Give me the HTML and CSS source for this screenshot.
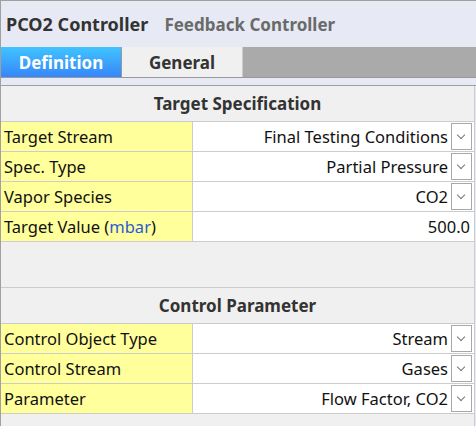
FILE: index.html
```html
<!DOCTYPE html>
<html>
<head>
	<title>PCO2 Controller</title>
	<link rel="stylesheet" href="styles.css">
</head>
<body>
	<div id="window">
		<div id="titlebar">
			<span class="title">PCO2 Controller</span>
			<span class="subtitle">Feedback Controller</span>
		</div>
		<div id="tabs">
			<div class="tab active">Definition</div>
			<div class="tab">General</div>
		</div>
		<div id="tab_gap"></div>

		<div id="panel">
			<div class="section">Target Specification</div>
			<div class="row">
				<div class="label">Target Stream</div>
				<div class="value">Final Testing Conditions<span class="drop"></span></div>
			</div>
			<div class="row">
				<div class="label">Spec. Type</div>
				<div class="value">Partial Pressure<span class="drop"></span></div>
			</div>
			<div class="row">
				<div class="label">Vapor Species</div>
				<div class="value">CO2<span class="drop"></span></div>
			</div>
			<div class="row">
				<div class="label">Target Value (<span class="unit">mbar</span>)</div>
				<div class="value number">500.0</div>
			</div>

			<div class="spacer"></div>

			<div class="section">Control Parameter</div>
			<div class="row">
				<div class="label">Control Object Type</div>
				<div class="value">Stream<span class="drop"></span></div>
			</div>
			<div class="row">
				<div class="label">Control Stream</div>
				<div class="value">Gases<span class="drop"></span></div>
			</div>
			<div class="row">
				<div class="label">Parameter</div>
				<div class="value">Flow Factor, CO2<span class="drop"></span></div>
			</div>
		</div>
	</div>
</body>
</html>
```

FILE: styles.css
```css
html, body {
	margin: 0;
	height: 100%;
}

body {
	font-family: "Noto Sans", "Open Sans", sans-serif;
	font-size: 16.5px;
	color: #111;
	background-color: #f0f0f0;
}

#window {
	border-top: 1px solid #a0a0a0;
	border-left: 1px solid #a0a0a0;
	height: 425px;
	overflow: hidden;
	background-color: #e7eaf5;
}

#titlebar {
	height: 46px;
	display: flex;
	align-items: center;
	padding-left: 5px;
	gap: 16px;
	font-weight: bold;
	font-size: 18px;
}

.title {
	color: #333;
}

.subtitle {
	color: #6a6a6a;
	font-size: 17px;
}

#tabs {
	display: flex;
	height: 30px;
	background-color: #aaa;
	border-bottom: 1px solid #999;
}

.tab {
	width: 120px;
	display: flex;
	align-items: center;
	justify-content: center;
	font-weight: bold;
	font-size: 17px;
	color: #333;
	background-color: #f0f0f0;
	border-right: 1px solid #ccc;
}

.tab.active {
	color: #fff;
	background: linear-gradient(#40c4ff, #3686fa);
	border-right: 1px solid #999;
}

#tab_gap {
	height: 7px;
	border-bottom: 1px solid #a0a0a0;
}

#panel {
	background-color: #f0f0f0;
	margin-right: 1px;
	border-right: 1px solid #ccc;
	height: 400px;
}

.section {
	height: 35px;
	border-bottom: 1px solid #ccc;
	display: flex;
	align-items: center;
	justify-content: center;
	font-weight: bold;
	font-size: 17px;
	color: #333;
}

.row {
	display: grid;
	grid-template-columns: 192px 1fr;
	height: 29px;
	border-bottom: 1px solid #ccc;
}

.label {
	background-color: #ffff9c;
	border-right: 1px solid #ccc;
	padding-left: 3px;
	display: flex;
	align-items: center;
	white-space: nowrap;
}

.unit {
	color: #2a5bd7;
}

.value {
	background-color: #fff;
	display: flex;
	align-items: center;
	justify-content: flex-end;
	padding-right: 2px;
	white-space: nowrap;
}

.value.number {
	padding-right: 4px;
}

.drop {
	width: 19px;
	height: 25px;
	margin-left: 3px;
	border: 1px solid #a8a8a8;
	background-color: #fff;
	position: relative;
}

.drop::after {
	content: "";
	position: absolute;
	left: 6px;
	top: 8px;
	width: 5px;
	height: 5px;
	border-right: 1px solid #777;
	border-bottom: 1px solid #777;
	transform: rotate(45deg);
}

.spacer {
	height: 45px;
	border-bottom: 1px solid #ccc;
}
```
